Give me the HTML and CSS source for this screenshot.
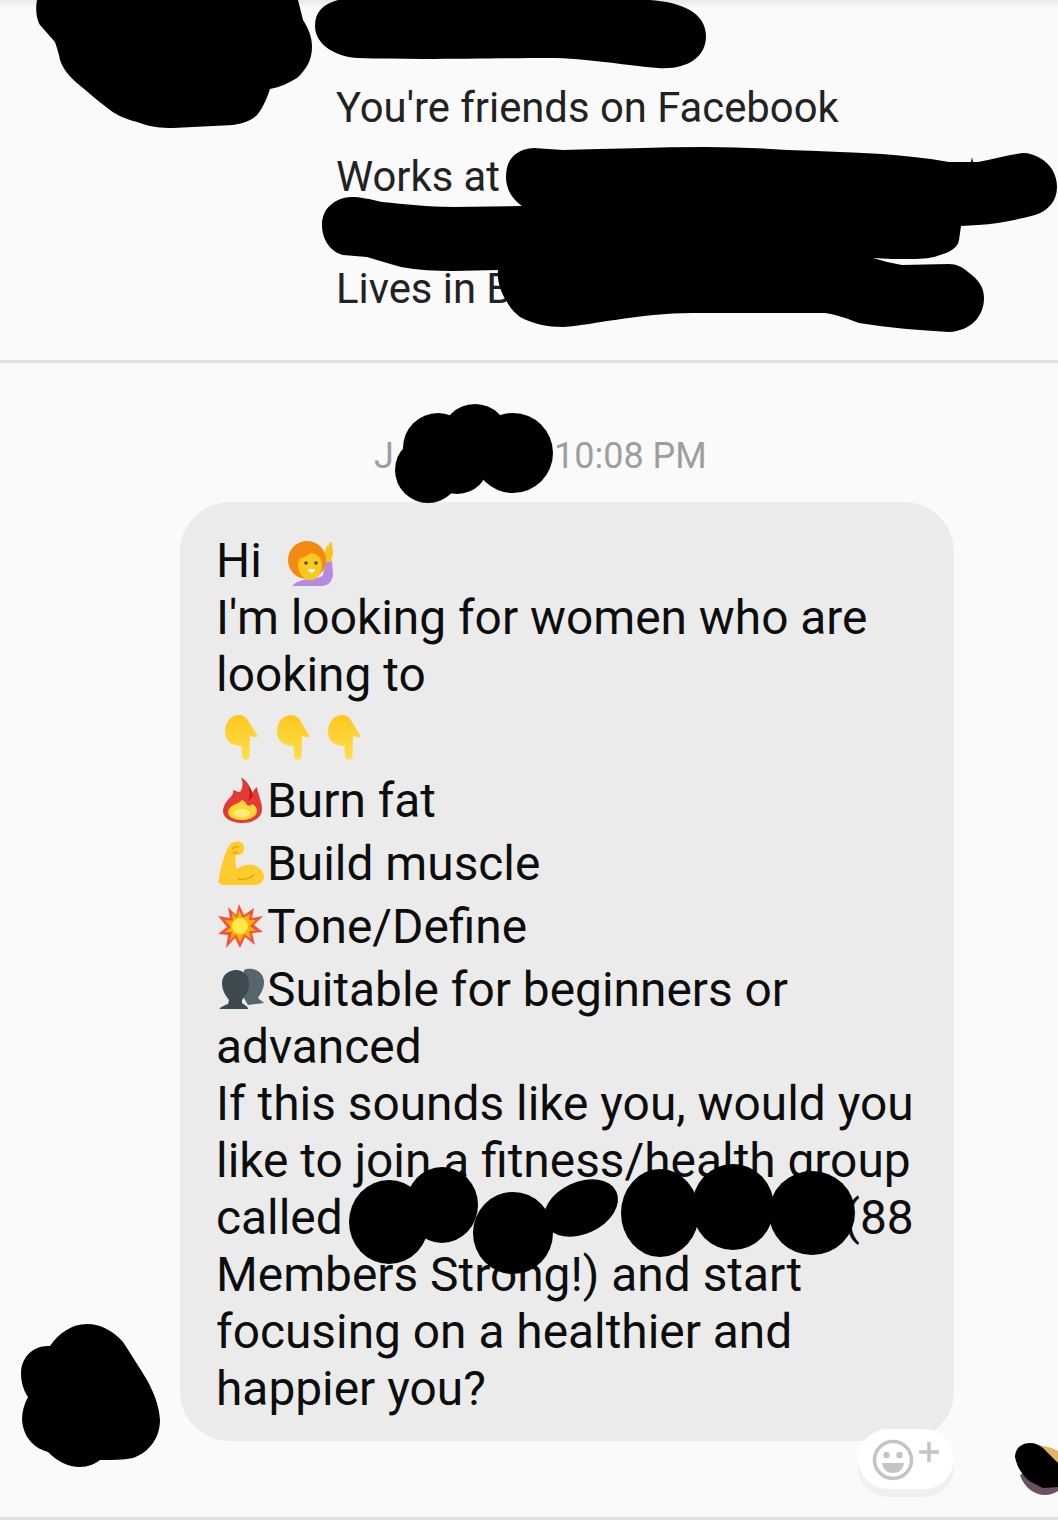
FILE: index.html
```html
<!DOCTYPE html>
<html lang="en">
<head>
    <meta charset="UTF-8">
    <meta name="viewport" content="width=device-width, initial-scale=1.0">
    <title>Message</title>
    <link rel="stylesheet" href="styles.css">
</head>
<body>

<div class="screen">
    <header class="profile">
        <div class="profile-name"></div>
        <p class="profile-line friends">You're friends on Facebook</p>
        <p class="profile-line works">Works at</p>
        <p class="profile-line lives">Lives in B</p>
    </header>

    <section class="thread">
        <div class="timestamp"><span class="date">J</span><span class="time">10:08 PM</span></div>

        <div class="bubble">
            <div class="line">Hi
                <svg class="emoji emoji-wave" viewBox="0 0 47 46">
                    <path d="M6 44c4-4 10-5 16-6 6-1 12-1 14-4l2-14h7l1 14c-1 7-5 11-12 11H9c-2 0-4 0-3-1z" fill="#b58be0"/>
                    <path d="M38 21c-2-4-1-7 0-10l2-7 1 2 2-5 2 1 1 10-2 9z" fill="#fcc21b"/>
                    <circle cx="20" cy="19" r="19" fill="#f28a0f"/>
                    <path d="M11 24c0-7 5-12 13-12 6 0 11 5 11 12 0 8-5 15-11 15-8 0-13-7-13-15z" fill="#fbc81e"/>
                    <path d="M10 18c5-1 11-3 14-7-8-2-13 1-14 7z" fill="#f28a0f"/>
                    <circle cx="19" cy="22" r="1.800" fill="#5a4a20"/>
                    <circle cx="29" cy="22" r="1.800" fill="#5a4a20"/>
                    <path d="M21 28h7c-1 5-6 5-7 0z" fill="#fff"/>
                </svg>
            </div>
            <div class="line">I'm looking for women who are</div>
            <div class="line">looking to</div>
            <div class="line line-hands">
                <svg class="emoji emoji-point" viewBox="0 0 32 45"><use href="#point"/></svg>
                <svg class="emoji emoji-point" viewBox="0 0 32 45"><use href="#point"/></svg>
                <svg class="emoji emoji-point" viewBox="0 0 32 45"><use href="#point"/></svg>
            </div>
            <div class="line line-emoji">
                <svg class="emoji emoji-list" viewBox="0 0 46 46">
                    <path d="M23 0c3 6 1 11-1 14-2 0-4-1-7-2 1 5-3 7-6 11-3 4-4 7-4 10 0 7 8 12 19 12s20-5 20-14c0-8-4-14-5-22-3 2-4 5-5 7-1-7-5-13-10-16z" fill="#e53935"/>
                    <path d="M30 7c2 6 2 12 0 16 3-2 5-4 5-7-1-3-3-6-5-9z" fill="#b71c1c"/>
                    <path d="M24 22c-2 4-13 4-14 12 0 5 6 8 14 8 8 0 15-4 15-9 0-4-3-6-5-7-1 2-3 2-5 1-1-2-2-4-5-5z" fill="#fdd835"/>
                    <ellipse cx="24" cy="35" rx="8" ry="4" fill="#ffeb80"/>
                </svg>Burn fat
            </div>
            <div class="line line-emoji">
                <svg class="emoji emoji-list" viewBox="0 0 46 46">
                    <path d="M1 38c1-10 5-24 10-33 3-5 11-6 14-2 2 4 1 9-3 11h-4c-1 4-1 9 1 14 4-4 11-5 16-4 6 2 11 6 11 12 0 5-4 8-10 8H6c-4 0-6-2-5-6z" fill="#fdcb2e"/>
                    <path d="M20 38c5 1 12 0 16-4" fill="none" stroke="#e8a200" stroke-width="1.500"/>
                    <path d="M14 8c2-2 5-3 7-2M15 12c2-1 3-1 5 0" fill="none" stroke="#e8a200" stroke-width="1.500"/>
                </svg>Build muscle
            </div>
            <div class="line line-emoji">
                <svg class="emoji emoji-list" viewBox="0 0 46 46">
                    <polygon points="21,0 26,11 36,4 34,14 45,12 36,21 45,28 34,29 37,41 27,33 22,44 17,34 8,44 10,31 0,30 9,23 0,12 12,14 10,3 18,11" fill="#f2543d"/>
                    <polygon points="21,6 25,14 32,10 31,16 38,16 32,22 38,27 31,27 33,35 26,30 22,38 18,30 12,37 14,28 7,28 13,23 7,16 15,17 14,9 19,14" fill="#ffb300"/>
                    <circle cx="22" cy="22" r="8" fill="#ffe94d"/>
                </svg>Tone/Define
            </div>
            <div class="line line-emoji">
                <svg class="emoji emoji-list" viewBox="0 0 46 46">
                    <path d="M26 3c8-4 20 1 20 12 0 8-4 12-6 16 1 2 5 3 6 5l-16 2-6-10z" fill="#56666e"/>
                    <path d="M4 16C4 8 11 3 18 3c7 0 13 5 13 14 0 7-4 12-7 16v3c2 2 6 3 6 6H2c-2 0 2-3 8-5l1-4c-3-4-7-9-7-17z" fill="#3e4a50"/>
                </svg>Suitable for beginners or
            </div>
            <div class="line">advanced</div>
            <div class="line">If this sounds like you, would you</div>
            <div class="line">like to join a fitness/health group</div>
            <div class="line">called <span class="hidden-name"></span>(88</div>
            <div class="line">Members Strong!) and start</div>
            <div class="line">focusing on a healthier and</div>
            <div class="line">happier you?</div>
        </div>

        <div class="reaction">
            <svg class="reaction-icon" viewBox="0 0 68 44">
                <circle cx="21" cy="22" r="18.500" fill="none" stroke="#c4c4c4" stroke-width="3.500"/>
                <circle cx="14.500" cy="17" r="3.200" fill="#c4c4c4"/>
                <circle cx="27.500" cy="17" r="3.200" fill="#c4c4c4"/>
                <path d="M10 25h22c-1 7-6 10-11 10s-10-3-11-10z" fill="#c4c4c4"/>
                <path d="M57 4v20M47 14h20" fill="none" stroke="#c4c4c4" stroke-width="3.500"/>
            </svg>
        </div>
    </section>
    <div class="bottom-rule"></div>
</div>

<!-- shared glyph for the pointing hands -->
<svg class="defs" width="0" height="0">
    <defs>
        <linearGradient id="point-fill" x1="0" y1="0" x2="0" y2="1">
            <stop offset="0" stop-color="#fdc81f"/>
            <stop offset="1" stop-color="#ffdf4a"/>
        </linearGradient>
        <path id="point" d="M0 17C0 7 6 0 14 0c5 0 8 3 10 7l8 13c1 2-1 3-3 2l-4-1-.5 20c0 5-7.500 5-7.500 0l-.5-10C7 31 0 26 0 17z" fill="url(#point-fill)"/>
    </defs>
</svg>

<!-- marker scribbles drawn over the screenshot -->
<svg class="scribbles" viewBox="0 0 1058 1539">
    <path class="scribble-tan" d="M55 40l4 14 3-4z"/>
    <path d="M37 0C35 10 37 20 40 25L55 42C57 48 59 54 60 60 64 72 73 80 83 88 92 96 101 103 110 110 119 117 130 120 140 123 150 127 161 128 173 128L233 125C245 123 252 120 257 115 263 108 267 98 270 89 280 87 289 83 297 78 306 70 312 60 312 47 312 36 308 28 303 20L298 0z"/>
    <path d="M338 0H650c30 2 56 12 56 36 0 22-20 34-48 32-30-2-70-10-110-10-50 0-130 2-190 0-20-1-43-12-43-32 0-14 8-22 23-26z"/>
    <path d="M534 148C515 149 506 160 506 177 506 189 512 199 522 206L453 207C428 207 405 204 382 202 370 199 360 197 351 197 334 198 322 209 322 225 322 240 331 252 343 255L367 257C378 260 389 264 401 267 418 270 436 271 453 271L498 270C497 280 500 291 506 300 510 308 514 312 520 317 533 324 548 327 563 327 581 326 598 322 615 320 641 316 666 313 692 313L825 313C838 315 848 319 859 323 889 328 919 330 949 332 970 331 984 317 984 298 984 287 978 279 968 272 963 267 956 264 949 264L902 265C892 263 882 261 873 258 886 259 898 259 911 259 923 259 933 258 940 255 951 252 958 247 959 240L961 226 978 225C997 224 1016 220 1035 215 1048 211 1057 201 1057 187 1057 175 1051 164 1040 158 1035 155 1029 153 1023 153 1008 155 993 159 978 162L949 162C927 158 905 156 882 154 850 152 818 151 787 150 760 148 733 147 706 147 658 147 610 149 563 150z"/>
    <path d="M971 162l1-5 1 5z"/>
    <circle cx="438" cy="448" r="35"/>
    <circle cx="428" cy="470" r="33"/>
    <circle cx="475" cy="438" r="34"/>
    <circle cx="513" cy="453" r="40"/>
    <circle cx="457" cy="462" r="32"/>
    <ellipse cx="389" cy="1222" rx="40" ry="42"/>
    <ellipse cx="442" cy="1205" rx="36" ry="38"/>
    <ellipse cx="513" cy="1233" rx="40" ry="41"/>
    <ellipse cx="581" cy="1208" rx="39" ry="26" transform="rotate(-25 581 1208)"/>
    <ellipse cx="660" cy="1213" rx="39" ry="44"/>
    <ellipse cx="733" cy="1207" rx="41" ry="43"/>
    <ellipse cx="812" cy="1213" rx="43" ry="42"/>
    <path d="M87 1324C72 1324 59 1333 50 1346 47 1346 43 1346 40 1347 28 1351 21 1361 21 1373 21 1383 24 1391 28 1397 24 1404 22 1412 22 1420 23 1431 27 1438 32 1443 37 1448 42 1450 48 1452 57 1461 68 1467 80 1467 88 1467 95 1464 100 1460 112 1460 123 1460 133 1458 150 1452 160 1437 160 1420 159 1405 154 1393 147 1380 139 1367 131 1354 123 1342 113 1331 101 1324 87 1324z"/>
    <path class="scribble-photo" d="M1020 1475c4 13 15 20 25 20 5 0 10-2 13-4v-15l-30-6z"/>
    <path class="scribble-tan" d="M1040 1446c7 0 13 2 18 5v15l-20-18z"/>
    <path d="M1015 1457C1015 1448 1022 1443 1030 1443 1035 1443 1040 1445 1043 1448L1058 1463V1487L1043 1488 1033 1483C1024 1478 1017 1468 1015 1457z"/>
</svg>

</body>
</html>
```

FILE: styles.css
```css
* {
    box-sizing: border-box;
}
html, body {
    margin: 0;
    padding: 0;
    background-color: #fff;
}
body {
    font-family: Roboto, "Liberation Sans", sans-serif;
    position: relative;
    width: 1058px;
    height: 1539px;
    overflow: hidden;
}
.screen {
    background-color: #fafafa;
}
.profile {
    height: 363px;
    padding-left: 336px;
    border-bottom: 3px solid #e2e2e2;
    background: linear-gradient(#e8e8e8, #fafafa 8px);
}
.profile-name {
    height: 83px;
}
.profile-line {
    margin: 0;
    font-size: 41.8px;
    line-height: 50px;
    color: #222;
}
.works {
    margin-top: 19px;
}
.lives {
    margin-top: 62px;
}
.thread {
    height: 1154px;
    padding-top: 68px;
    position: relative;
}
.timestamp {
    display: flex;
    height: 50px;
    padding-left: 374px;
    font-size: 36px;
    line-height: 50px;
    color: #9e9e9e;
}
.date {
    width: 180px;
}
.bubble {
    width: 774px;
    height: 939px;
    margin: 21px 0 0 180px;
    padding: 31px 0 0 36px;
    background-color: #ebebeb;
    border-radius: 50px;
    font-size: 47.85px;
    color: #0d0d0d;
}
.line {
    height: 57px;
    line-height: 57px;
    white-space: nowrap;
}
.line-emoji {
    display: flex;
    height: 63px;
    line-height: 69px;
}
.line-hands {
    display: flex;
    align-items: center;
    gap: 19.5px;
    height: 63px;
    padding: 4px 0 0 9px;
}
.emoji {
    vertical-align: middle;
}
.emoji-wave {
    width: 47px;
    height: 46px;
    margin-left: 13px;
}
.emoji-point {
    width: 32px;
    height: 45px;
}
.emoji-list {
    flex: none;
    width: 46px;
    height: 46px;
    margin: 11px 3px 0 2px;
}
.hidden-name {
    display: inline-block;
    width: 489px;
}
.reaction {
    position: absolute;
    left: 858px;
    top: 1066px;
    width: 96px;
    height: 60px;
    padding: 9px 0 0 14px;
    background-color: #fff;
    border-radius: 30px;
    box-shadow: 0 8px 0 #f0f0f0;
}
.reaction-icon {
    display: block;
    width: 68px;
    height: 44px;
}
.bottom-rule {
    height: 3px;
    background-color: #e2e2e2;
}
.defs {
    position: absolute;
}
.scribbles {
    position: absolute;
    left: 0;
    top: 0;
    width: 1058px;
    height: 1539px;
    fill: #000;
}
.scribble-photo {
    fill: #6a5060;
}
.scribble-tan {
    fill: #e3b264;
}
```
